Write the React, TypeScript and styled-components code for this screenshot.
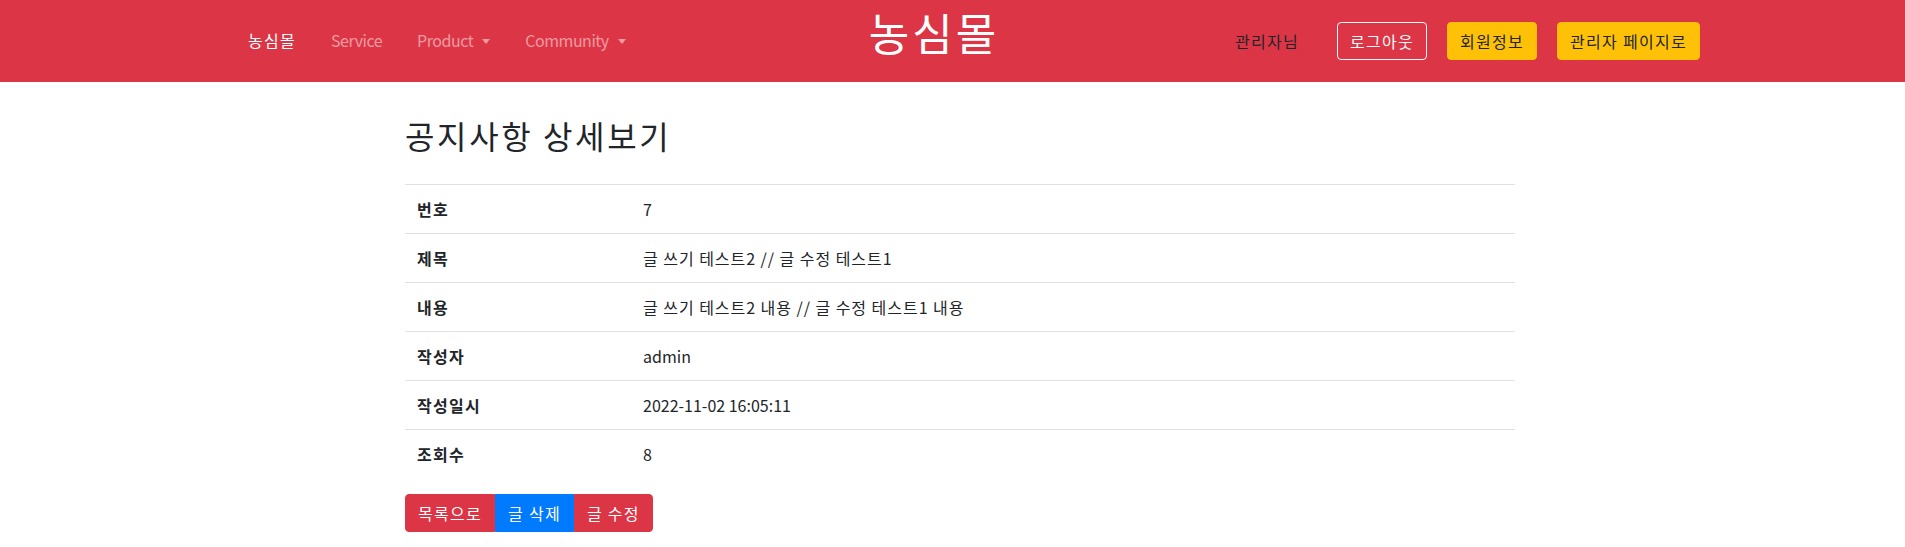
import React from "react";
import styled, { createGlobalStyle, css } from "styled-components";

const GlobalStyle = createGlobalStyle`
  *, *::before, *::after { box-sizing: border-box; }
  html, body { margin: 0; padding: 0; background: #fff; }
  body {
    font-family: "Noto Sans CJK KR", "Noto Sans", sans-serif;
    font-size: 16px;
    line-height: 1.5;
    color: #212529;
    letter-spacing: 0.08em;
  }
`;

const hasHangul = (s: string) => /[가-힣]/.test(s);
const hasLatin = (s: string) => /[A-Za-z0-9]/.test(s);
const spacingFor = (s: string) =>
  !hasHangul(s) ? 0 : hasLatin(s) ? 0.06 : 0.08;

const Navbar = styled.nav`
  display: flex;
  align-items: center;
  justify-content: space-between;
  height: 82px;
  padding: 0 205px 0 240px;
  background: #dc3545;
`;

const NavList = styled.ul`
  display: flex;
  align-items: center;
  gap: 19px;
  list-style: none;
  margin: 0;
  padding: 0 0 2px;
`;

const NavLink = styled.a<{ $active?: boolean; $dropdown?: boolean; $ls: number }>`
  display: block;
  padding: 8px;
  color: ${(p) => (p.$active ? "#fff" : "rgba(255,255,255,0.5)")};
  letter-spacing: ${(p) => p.$ls}em;
  text-decoration: none;
  cursor: pointer;
  ${(p) =>
    p.$dropdown &&
    css`
      &::after {
        content: "";
        display: inline-block;
        margin-left: 9px;
        vertical-align: 3px;
        border-top: 5px solid;
        border-left: 4.5px solid transparent;
        border-right: 4.5px solid transparent;
      }
    `}
`;

const Brand = styled.h1`
  margin: 0 1px 18px 0;
  font-size: 44px;
  font-weight: 400;
  line-height: 1;
  letter-spacing: 3px;
  color: #fff;
`;

const UserArea = styled.div`
  display: flex;
  align-items: center;
  gap: 20px;
`;

const Greeting = styled.span`
  color: #212529;
  margin-right: 18px;
`;

type Variant = "outlineLight" | "warning" | "danger" | "primary";

const variants: Record<Variant, ReturnType<typeof css>> = {
  outlineLight: css`
    background: transparent;
    border-color: #f8f9fa;
    color: #f8f9fa;
  `,
  warning: css`
    background: #ffc107;
    border-color: #ffc107;
    color: #212529;
  `,
  danger: css`
    background: #dc3545;
    border-color: #dc3545;
    color: #fff;
  `,
  primary: css`
    background: #007bff;
    border-color: #007bff;
    color: #fff;
  `,
};

const Button = styled.button<{ $variant: Variant }>`
  display: inline-block;
  font-family: inherit;
  font-size: 16px;
  line-height: 24px;
  letter-spacing: 0.08em;
  padding: 6px 12px;
  border: 1px solid transparent;
  border-radius: 4px;
  cursor: pointer;
  white-space: nowrap;
  ${(p) => variants[p.$variant]}
`;

const Main = styled.main`
  padding: 34px 0 0 15px;
`;

const Container = styled.div`
  max-width: 1110px;
  margin: 0 auto;
`;

const PageTitle = styled.h2`
  margin: 0 0 30px;
  font-size: 32px;
  font-weight: 400;
  line-height: 1.2;
  letter-spacing: 0.082em;
  color: #212529;
`;

const Table = styled.table`
  width: 100%;
  border-collapse: collapse;
  margin-bottom: 16px;
  color: #212529;
`;

const Row = styled.tr`
  border-top: 1px solid #dee2e6;
`;

const HeadCell = styled.th`
  width: 226px;
  padding: 12px;
  text-align: left;
  font-weight: 700;
  vertical-align: top;
`;

const Cell = styled.td<{ $ls: number }>`
  padding: 12px;
  vertical-align: top;
  letter-spacing: ${(p) => p.$ls}em;
`;

const ButtonGroup = styled.div`
  display: inline-flex;
  & > button {
    border-radius: 0;
  }
  & > button:first-child {
    border-top-left-radius: 4px;
    border-bottom-left-radius: 4px;
  }
  & > button:last-child {
    border-top-right-radius: 4px;
    border-bottom-right-radius: 4px;
  }
`;

const navItems = [
  { label: "농심몰", active: true, dropdown: false },
  { label: "Service", active: false, dropdown: false },
  { label: "Product", active: false, dropdown: true },
  { label: "Community", active: false, dropdown: true },
];

const navSpacing = (s: string) => (hasHangul(s) ? 0.08 : -0.03);

const rows: [string, string][] = [
  ["번호", "7"],
  ["제목", "글 쓰기 테스트2 // 글 수정 테스트1"],
  ["내용", "글 쓰기 테스트2 내용 // 글 수정 테스트1 내용"],
  ["작성자", "admin"],
  ["작성일시", "2022-11-02 16:05:11"],
  ["조회수", "8"],
];

export default function App() {
  return (
    <>
      <GlobalStyle />
      <Navbar>
        <NavList>
          {navItems.map((n) => (
            <li key={n.label}>
              <NavLink $active={n.active} $dropdown={n.dropdown} $ls={navSpacing(n.label)}>
                {n.label}
              </NavLink>
            </li>
          ))}
        </NavList>
        <Brand>농심몰</Brand>
        <UserArea>
          <Greeting>관리자님</Greeting>
          <Button $variant="outlineLight">로그아웃</Button>
          <Button $variant="warning">회원정보</Button>
          <Button $variant="warning">관리자 페이지로</Button>
        </UserArea>
      </Navbar>
      <Main>
        <Container>
          <PageTitle>공지사항 상세보기</PageTitle>
          <Table>
            <tbody>
              {rows.map(([k, v]) => (
                <Row key={k}>
                  <HeadCell>{k}</HeadCell>
                  <Cell $ls={spacingFor(v)}>{v}</Cell>
                </Row>
              ))}
            </tbody>
          </Table>
          <ButtonGroup>
            <Button $variant="danger">목록으로</Button>
            <Button $variant="primary">글 삭제</Button>
            <Button $variant="danger">글 수정</Button>
          </ButtonGroup>
        </Container>
      </Main>
    </>
  );
}
